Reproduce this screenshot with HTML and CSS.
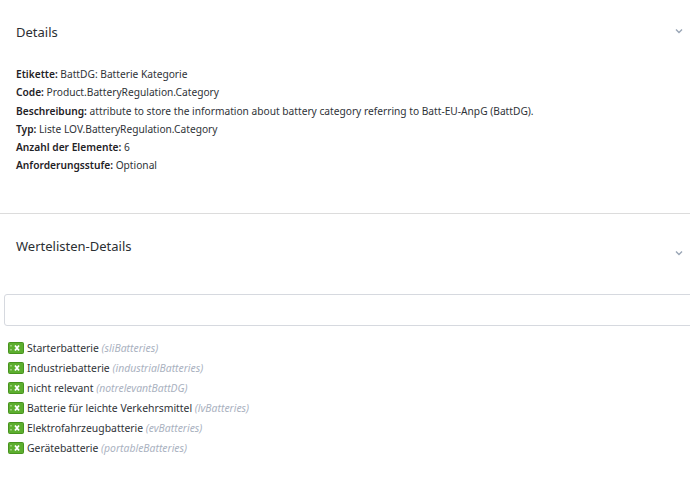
FILE: index.html
```html
<!DOCTYPE html>
<html lang="de">

<head>
  <meta charset="UTF-8">
  <meta name="viewport" content="width=device-width, initial-scale=1.0">
  <title>Details</title>
  <link rel="stylesheet" href="styles.css">
</head>

<body>
  <!-- Attribute details -->
  <section class="panel panel-details">
    <div class="panel-header">
      <h2>Details</h2>
      <svg class="chevron" width="8" height="6" viewBox="0 0 8 6"><path d="M1 1.5 L4 4.5 L7 1.5" fill="none" stroke="#9aa6b6" stroke-width="1.4"/></svg>
    </div>
    <ul class="detail-list">
      <li><b>Etikette:</b> BattDG: Batterie Kategorie</li>
      <li><b>Code:</b> Product.BatteryRegulation.Category</li>
      <li><b>Beschreibung:</b> attribute to store the information about battery category referring to Batt-EU-AnpG (BattDG).</li>
      <li><b>Typ:</b> Liste LOV.BatteryRegulation.Category</li>
      <li><b>Anzahl der Elemente:</b> 6</li>
      <li><b>Anforderungsstufe:</b> Optional</li>
    </ul>
  </section>

  <!-- List of values -->
  <section class="panel panel-values">
    <div class="panel-header">
      <h2>Wertelisten-Details</h2>
      <svg class="chevron chevron-low" width="8" height="6" viewBox="0 0 8 6"><path d="M1 1.5 L4 4.5 L7 1.5" fill="none" stroke="#9aa6b6" stroke-width="1.4"/></svg>
    </div>
    <input class="filter" type="text" autocomplete="off">
    <ul class="value-list">
      <li><svg class="lov-icon" viewBox="0 0 16 12"><rect x="0.5" y="0.5" width="15" height="11" rx="1" fill="#5cae2e" stroke="#48931f"/><path d="M3 3v1.5M3 7v1.5" stroke="#cfe9b8" stroke-width="1"/><path d="M7 3.5l4 5M11 3.5l-4 5" stroke="#fff" stroke-width="1.8"/></svg>Starterbatterie <i>(sliBatteries)</i></li>
      <li><svg class="lov-icon" viewBox="0 0 16 12"><rect x="0.5" y="0.5" width="15" height="11" rx="1" fill="#5cae2e" stroke="#48931f"/><path d="M3 3v1.5M3 7v1.5" stroke="#cfe9b8" stroke-width="1"/><path d="M7 3.5l4 5M11 3.5l-4 5" stroke="#fff" stroke-width="1.8"/></svg>Industriebatterie <i>(industrialBatteries)</i></li>
      <li><svg class="lov-icon" viewBox="0 0 16 12"><rect x="0.5" y="0.5" width="15" height="11" rx="1" fill="#5cae2e" stroke="#48931f"/><path d="M3 3v1.5M3 7v1.5" stroke="#cfe9b8" stroke-width="1"/><path d="M7 3.5l4 5M11 3.5l-4 5" stroke="#fff" stroke-width="1.8"/></svg>nicht relevant <i>(notrelevantBattDG)</i></li>
      <li><svg class="lov-icon" viewBox="0 0 16 12"><rect x="0.5" y="0.5" width="15" height="11" rx="1" fill="#5cae2e" stroke="#48931f"/><path d="M3 3v1.5M3 7v1.5" stroke="#cfe9b8" stroke-width="1"/><path d="M7 3.5l4 5M11 3.5l-4 5" stroke="#fff" stroke-width="1.8"/></svg>Batterie für leichte Verkehrsmittel <i>(lvBatteries)</i></li>
      <li><svg class="lov-icon" viewBox="0 0 16 12"><rect x="0.5" y="0.5" width="15" height="11" rx="1" fill="#5cae2e" stroke="#48931f"/><path d="M3 3v1.5M3 7v1.5" stroke="#cfe9b8" stroke-width="1"/><path d="M7 3.5l4 5M11 3.5l-4 5" stroke="#fff" stroke-width="1.8"/></svg>Elektrofahrzeugbatterie <i>(evBatteries)</i></li>
      <li><svg class="lov-icon" viewBox="0 0 16 12"><rect x="0.5" y="0.5" width="15" height="11" rx="1" fill="#5cae2e" stroke="#48931f"/><path d="M3 3v1.5M3 7v1.5" stroke="#cfe9b8" stroke-width="1"/><path d="M7 3.5l4 5M11 3.5l-4 5" stroke="#fff" stroke-width="1.8"/></svg>Gerätebatterie <i>(portableBatteries)</i></li>
    </ul>
  </section>
</body>

</html>
```

FILE: styles.css
```css
body {
  font-family: "Noto Sans", Arial, sans-serif;
  margin: 0;
  background-color: #ffffff;
  color: #2f3338;
  overflow: hidden;
}

ul {
  list-style-type: none;
  margin: 0;
  padding: 0;
}

.panel-header {
  display: flex;
  justify-content: space-between;
  align-items: flex-start;
  height: 16px;
  padding: 0 7px 0 16px;
}

.panel-header h2 {
  margin: 0;
  font-size: 13px;
  font-weight: 400;
  line-height: 16px;
  color: #2b2f33;
}

.chevron {
  flex-shrink: 0;
  margin-top: 4px;
}

.chevron-low {
  margin-top: 12px;
}

.panel-details {
  padding: 24px 0 38px;
  border-bottom: 1px solid #dcdcdc;
}

.detail-list {
  margin-top: 25px;
  padding-left: 16px;
  font-size: 10.2px;
  line-height: 18.3px;
}

.detail-list b {
  font-weight: 600;
  color: #1f2226;
}

.panel-values {
  padding-top: 24px;
}

.filter {
  display: block;
  width: 700px;
  height: 32px;
  box-sizing: border-box;
  margin: 40px 0 0 4px;
  border: 1px solid #d6d9df;
  border-radius: 3px;
  background-color: #ffffff;
}

.value-list {
  margin-top: 12px;
  padding-left: 8px;
  font-size: 10.4px;
  line-height: 20px;
}

.value-list li {
  display: flex;
  align-items: center;
  white-space: pre;
}

.lov-icon {
  width: 16px;
  height: 12px;
  margin-right: 3px;
}

.value-list i {
  color: #aab2bf;
}
```
